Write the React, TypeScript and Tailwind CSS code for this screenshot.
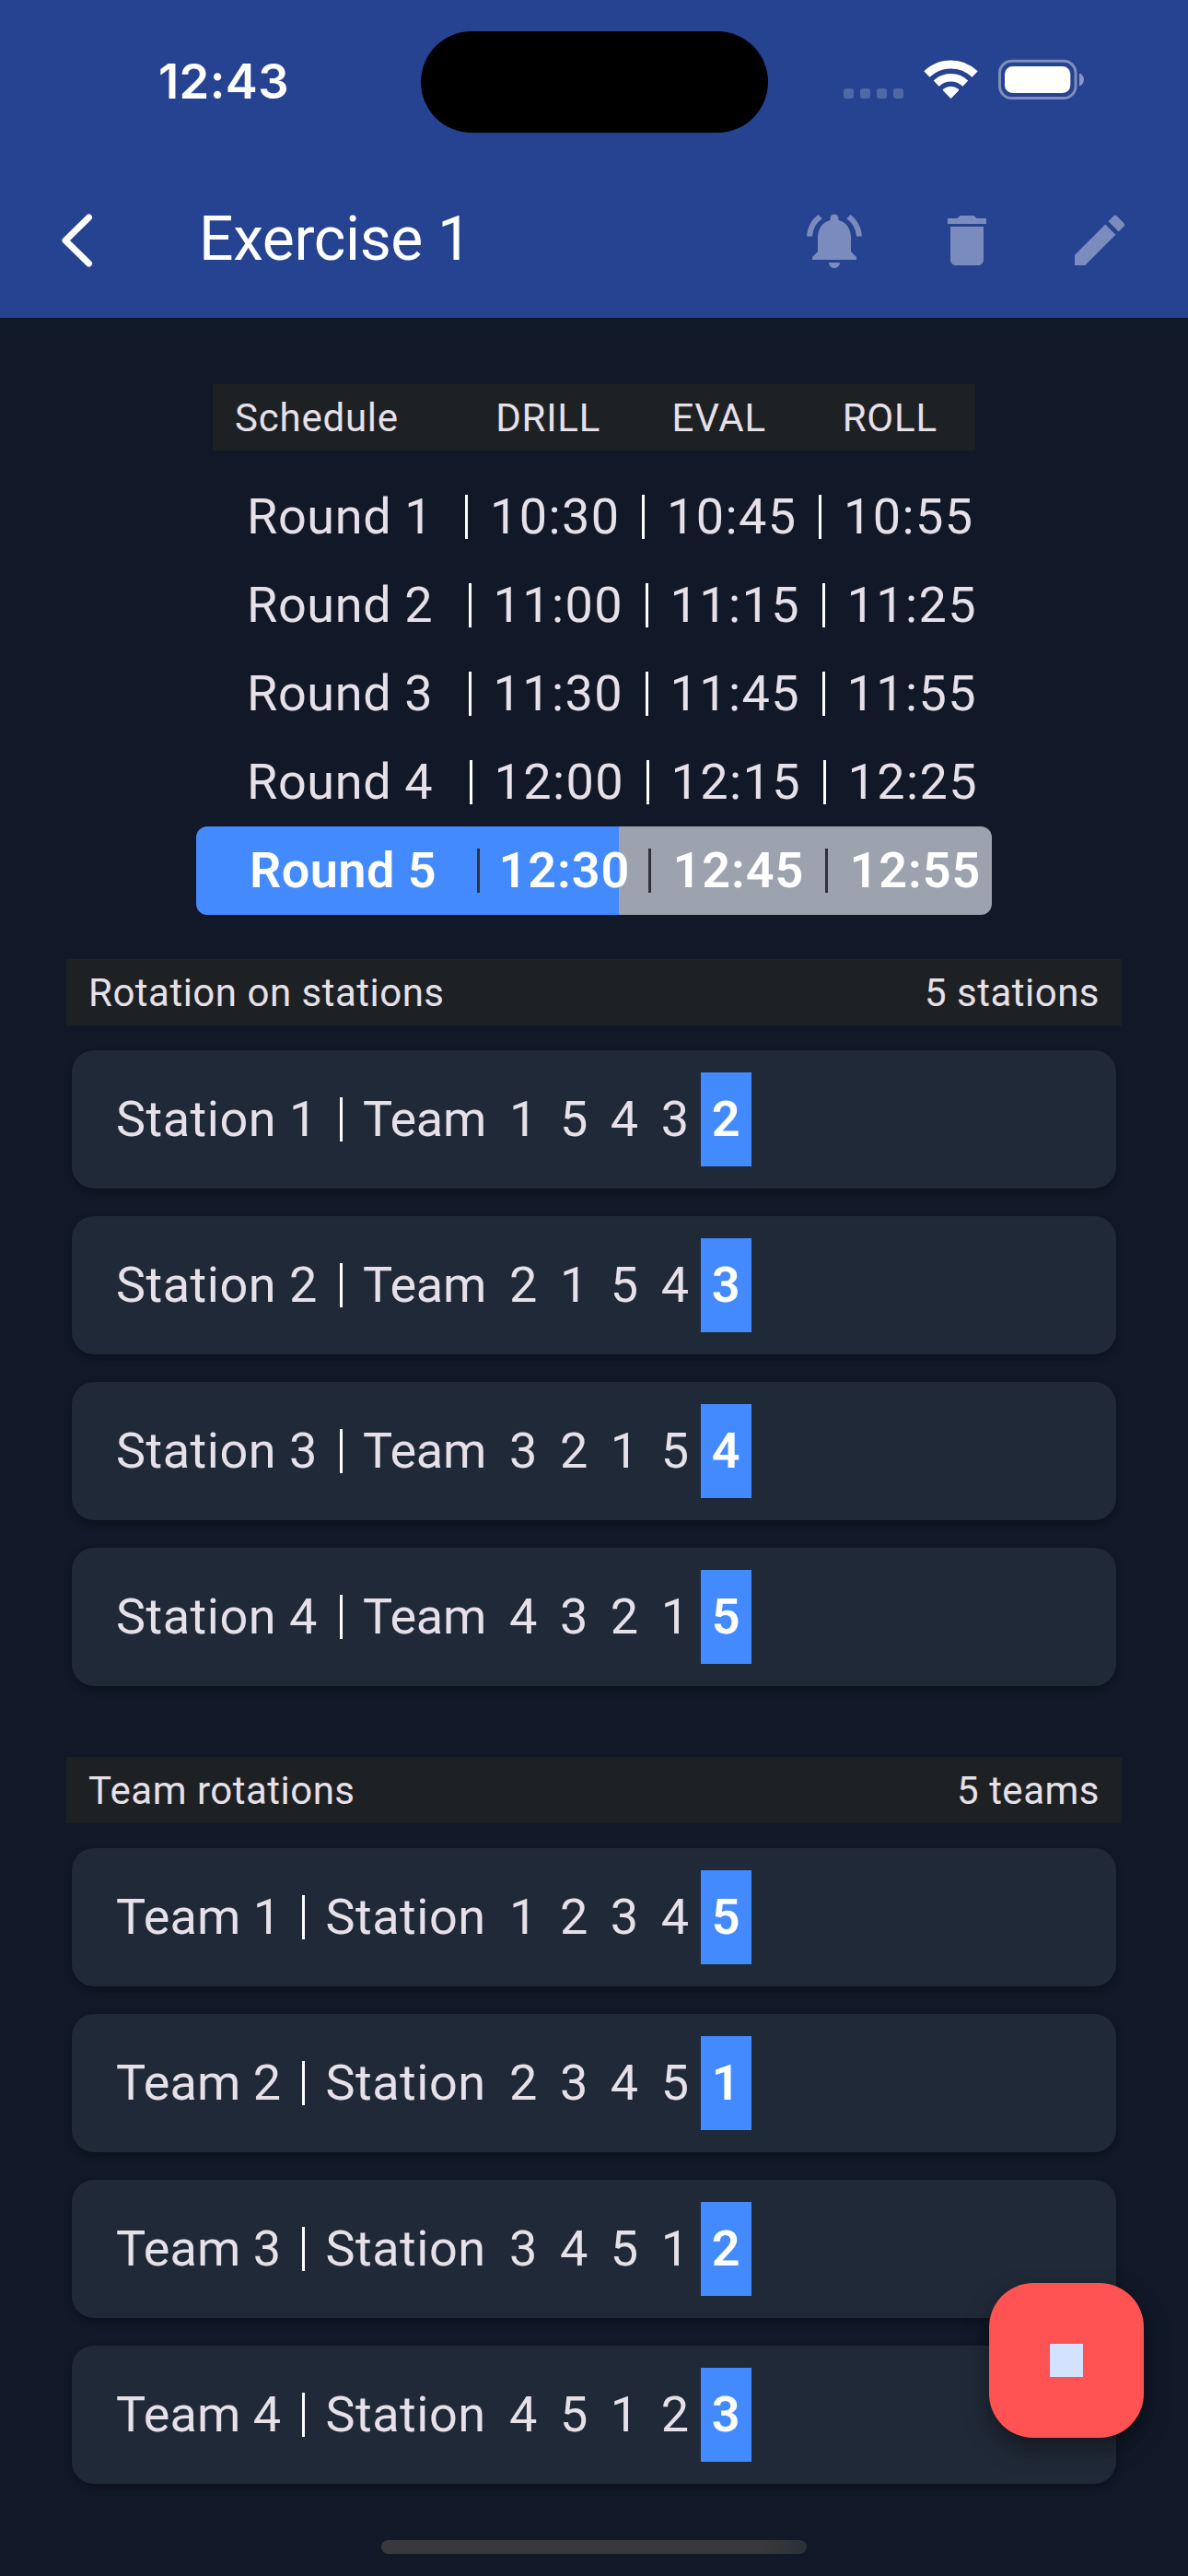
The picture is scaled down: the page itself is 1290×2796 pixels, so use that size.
import React from "react";
import { MdDelete, MdEdit, MdNotificationsActive } from "react-icons/md";

type Round = { name: string; times: string[]; labelWidth: string };

const rounds: Round[] = [
  { name: "Round 1", times: ["10:30", "10:45", "10:55"], labelWidth: "w-[237px]" },
  { name: "Round 2", times: ["11:00", "11:15", "11:25"], labelWidth: "w-[240.5px]" },
  { name: "Round 3", times: ["11:30", "11:45", "11:55"], labelWidth: "w-[240.5px]" },
  { name: "Round 4", times: ["12:00", "12:15", "12:25"], labelWidth: "w-[241.5px]" },
];

const stations = [
  ["1", "5", "4", "3", "2"],
  ["2", "1", "5", "4", "3"],
  ["3", "2", "1", "5", "4"],
  ["4", "3", "2", "1", "5"],
];

const teams = [
  ["1", "2", "3", "4", "5"],
  ["2", "3", "4", "5", "1"],
  ["3", "4", "5", "1", "2"],
  ["4", "5", "1", "2", "3"],
];

function StatusBar() {
  return (
    <div className="relative h-[177px] shrink-0">
      <span className="absolute left-[172px] top-[56px] font-['Inter'] text-[52.5px] font-semibold leading-[64px] tracking-[0.4px] text-white">
        12:43
      </span>
      <div className="absolute left-[457px] top-[33.5px] h-[110.5px] w-[376.5px] rounded-full bg-black" />
      <svg className="absolute left-[910px] top-[60px]" width="272" height="52" viewBox="910 60 272 52">
        <g fill="#5168a7">
          <rect x="916" y="96" width="11" height="11" rx="3" />
          <rect x="934" y="96" width="11" height="11" rx="3" />
          <rect x="952" y="96" width="11" height="11" rx="3" />
          <rect x="970" y="96" width="11" height="11" rx="3" />
        </g>
        <g fill="none" stroke="#fff">
          <path d="M1006.4 80.5A37.5 37.5 0 0 1 1058.6 80.5" strokeWidth="9" />
          <path d="M1016.7 90.6A23 23 0 0 1 1048.3 90.6" strokeWidth="8.5" />
        </g>
        <path d="M1032.5 107l-8.3-8.6q-1-1 .2-1.9 8.1-5.6 16.2 0 1.2.9.2 1.9z" fill="#fff" />
        <rect x="1085.5" y="66.3" width="82.5" height="40.2" rx="13" fill="none" stroke="#7d8ebd" strokeWidth="3" />
        <rect x="1091" y="72" width="71.3" height="29" rx="8.5" fill="#fff" />
        <path d="M1172 79.5c3 1 5 4 5 7s-2 6-5 7z" fill="#8999c4" />
      </svg>
    </div>
  );
}

function AppBar() {
  return (
    <div className="flex h-[168px] items-center pl-[48px] pr-[60px]">
      <svg width="72" height="72" viewBox="0 0 72 72" fill="none" stroke="#fff" strokeWidth="7" strokeLinecap="round" strokeLinejoin="round">
        <path d="M48.5 11L23 36L48.5 61" />
      </svg>
      <h1 className="-mt-[3px] ml-[96px] flex-1 text-[66px] leading-[84px] tracking-[-0.38px] text-white">Exercise 1</h1>
      <div className="flex gap-[72px] text-[72px] text-[#7a8bbd]">
        <MdNotificationsActive />
        <MdDelete />
        <MdEdit />
      </div>
    </div>
  );
}

function TimeCell({ time, className, bar = "bg-white" }: { time: string; className: string; bar?: string }) {
  return (
    <div className={`flex shrink-0 items-center ${className}`}>
      <span className={`h-[48px] w-[3px] shrink-0 ${bar}`} />
      <span>{time}</span>
    </div>
  );
}

function SectionHeader({ title, count }: { title: string; count: string }) {
  return (
    <div className="mx-[72px] flex h-[72px] items-center justify-between bg-[#1e2124] px-[24px] pt-[2px] text-[42px] leading-[60px] tracking-[0.5px]">
      <span>{title}</span>
      <span>{count}</span>
    </div>
  );
}

function RotationCard({
  name,
  nameClass,
  kind,
  kindClass,
  values,
}: {
  name: string;
  nameClass: string;
  kind: string;
  kindClass: string;
  values: string[];
}) {
  return (
    <div className="flex h-[150px] items-center rounded-[24px] bg-[#202937] pl-[48px] shadow-[0_4px_9px_rgba(0,0,0,0.28)]">
      <span className={`shrink-0 whitespace-nowrap ${nameClass}`}>{name}</span>
      <span className="ml-[24px] h-[48px] w-[3px] bg-white" />
      <span className={`ml-[22.5px] shrink-0 ${kindClass}`}>{kind}</span>
      <div className="flex">
        {values.map((value, i) => (
          <span
            key={i}
            className={
              i === 4
                ? "h-[102px] w-[55.4px] bg-[#448aff] text-center font-semibold leading-[102px] text-white"
                : "w-[54.95px] text-center leading-[102px]"
            }
          >
            {value}
          </span>
        ))}
      </div>
    </div>
  );
}

export default function App() {
  return (
    <div className="relative flex h-[2796px] w-[1290px] flex-col overflow-hidden bg-[#111827] font-['Roboto',sans-serif] text-[54px] leading-[72px] tracking-[0.63px] text-[#e6e0e9]">
      <header className="h-[345px] shrink-0 bg-[#264391] tracking-normal">
        <StatusBar />
        <AppBar />
      </header>

      <section className="mt-[72px]">
        <div className="ml-[231px] flex h-[72px] w-[828px] items-center bg-[#1e2124] pl-[24px] pt-[2px] text-[42px] tracking-[0.78px]">
          <span className="w-[248px]">Schedule</span>
          <span className="w-[186px] text-center">DRILL</span>
          <span className="w-[186px] text-center">EVAL</span>
          <span className="w-[186px] text-center">ROLL</span>
        </div>
        <div className="mt-[24px]">
          {rounds.map((round) => (
            <div key={round.name} className="flex h-[96px] items-center pl-[268px]">
              <span className={`shrink-0 ${round.labelWidth}`}>{round.name}</span>
              {round.times.map((time) => (
                <TimeCell key={time} time={time} className="w-[192px] gap-[24px] tracking-[1.39px]" />
              ))}
            </div>
          ))}
          <div className="ml-[213px] flex h-[96px] w-[864px] items-center rounded-[12px] bg-[linear-gradient(to_right,#448aff_459px,#9ca3af_459px)] pl-[58px] font-semibold text-white">
            <span className="w-[247px] shrink-0 tracking-[0.45px]">Round 5</span>
            <TimeCell time="12:30" bar="bg-[#303138]" className="w-[186px] gap-[20.5px] tracking-[0.94px]" />
            <TimeCell time="12:45" bar="bg-[#303138]" className="w-[192px] gap-[23.5px] tracking-[0.94px]" />
            <TimeCell time="12:55" bar="bg-[#303138]" className="w-[174px] gap-[23.5px] tracking-[0.94px]" />
          </div>
        </div>
      </section>

      <section className="mt-[48px]">
        <SectionHeader title="Rotation on stations" count="5 stations" />
        <div className="mx-[78px] mt-[27px] flex flex-col gap-[30px]">
          {stations.map((values, i) => (
            <RotationCard
              key={i}
              name={`Station ${i + 1}`}
              nameClass="w-[218.5px] tracking-[0.5px]"
              kind="Team"
              kindClass="w-[147px] tracking-[-0.2px]"
              values={values}
            />
          ))}
        </div>
      </section>

      <section className="mt-[76.5px]">
        <SectionHeader title="Team rotations" count="5 teams" />
        <div className="mx-[78px] mt-[27px] flex flex-col gap-[30px]">
          {teams.map((values, i) => (
            <RotationCard
              key={i}
              name={`Team ${i + 1}`}
              nameClass="w-[178px] tracking-[0.1px]"
              kind="Station"
              kindClass="w-[187.5px] tracking-[0.5px]"
              values={values}
            />
          ))}
        </div>
      </section>

      <button
        aria-label="Stop"
        className="absolute left-[1074px] top-[2478px] flex size-[168px] items-center justify-center rounded-[48px] bg-[#ff5353] shadow-[0_12px_30px_rgba(0,0,0,0.25),0_9px_15px_rgba(0,0,0,0.15)]"
      >
        <span className="size-[36px] bg-[#d3e3ff]" />
      </button>
      <div className="absolute left-[414px] top-[2757px] h-[15px] w-[462px] rounded-full bg-[linear-gradient(to_right,#37393c_90%,#2b2f38)]" />
    </div>
  );
}
